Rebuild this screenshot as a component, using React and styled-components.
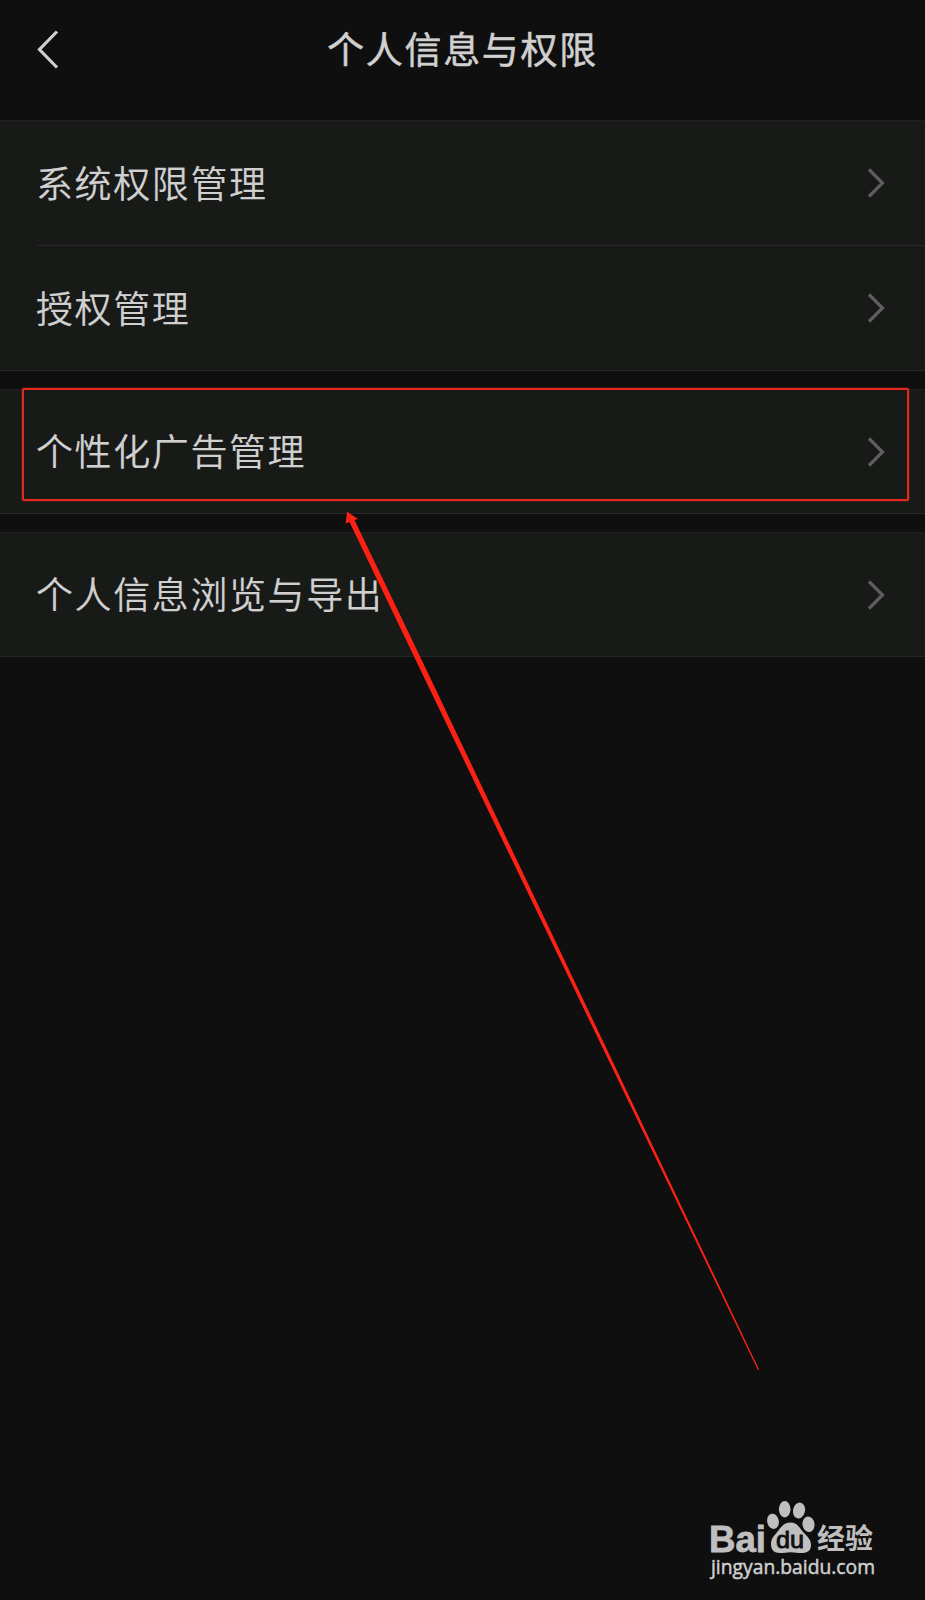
import React from 'react'
import styled, { createGlobalStyle } from 'styled-components'

const groups = [
    ["系统权限管理", "授权管理"],
    ["个性化广告管理"],
    ["个人信息浏览与导出"]
]

const GlobalStyle = createGlobalStyle`
    body {
        margin: 0;
        background: #0f0f0f;
    }
`

const Page = styled.div`
    position: relative;
    width: 925px;
    height: 1600px;
    overflow: hidden;
    background: #0f0f0f;
    color: #d0d0d0;
    font-family: "Noto Sans CJK SC", sans-serif;
`

const Header = styled.header`
    height: 120px;
    box-sizing: border-box;
    padding: 0 37px 22px;
    display: grid;
    grid-template-columns: 24px 1fr 24px;
    align-items: center;
`

const BackIcon = styled.svg`
    width: 24px;
    height: 40px;
    fill: none;
    stroke: #d0d0d0;
    stroke-width: 3.2;
`

const Title = styled.h1`
    margin: 0;
    padding-bottom: 2px;
    font-size: 37px;
    line-height: 56px;
    font-weight: 400;
    letter-spacing: 1.7px;
    text-align: center;
    -webkit-text-stroke: 0.5px #d0d0d0;
`

const Groups = styled.main`
    display: flex;
    flex-direction: column;
    gap: 18px;
`

const Group = styled.section`
    background: #181a18;
    border-top: 1px solid #1f201f;
    border-bottom: 1px solid #262626;
`

const Row = styled.div`
    height: ${props => props.$divided ? '125px' : '124px'};
    margin-left: 37px;
    padding-right: 40px;
    box-sizing: border-box;
    display: flex;
    align-items: center;
    justify-content: space-between;
    border-top: ${props => props.$divided ? '1px solid #272827' : 'none'};

    &:only-child {
        height: 123px;
    }
`

const Label = styled.span`
    margin-left: -1px;
    padding-bottom: 3px;
    font-size: 37px;
    line-height: 56px;
    font-weight: 350;
    letter-spacing: 1.6px;
    -webkit-text-stroke: 0.15px #d0d0d0;
`

const Chevron = styled.svg`
    width: 18px;
    height: 30px;
    fill: none;
    stroke: #5e5e5e;
    stroke-width: 3.2;
`

const Highlight = styled.div`
    position: absolute;
    top: 388px;
    left: 22px;
    width: 887px;
    height: 113px;
    box-sizing: border-box;
    border: 2px solid #e42a1e;
    border-radius: 2px;
    box-shadow: 0 0 0 1px rgba(228, 42, 30, 0.2);
`

const Arrow = styled.svg`
    position: absolute;
    top: 500px;
    left: 340px;
    width: 430px;
    height: 880px;
    fill: #fb2114;
`

const Watermark = styled.svg`
    position: absolute;
    right: 15px;
    bottom: 0;
    width: 220px;
    height: 120px;
    fill: #bfbfbf;
`

const BrandText = styled.text`
    font-family: "Liberation Sans", sans-serif;
    font-size: 37.5px;
    font-weight: 700;
    stroke: #bfbfbf;
    stroke-width: 0.8px;
`

const PawText = styled.text`
    font-family: "Liberation Sans", sans-serif;
    font-size: 24px;
    font-weight: 400;
    fill: #0f0f0f;
    stroke: #0f0f0f;
    stroke-width: 0.9px;
`

const BrandCjk = styled.text`
    font-family: "Noto Sans CJK SC", sans-serif;
    font-size: 28px;
    font-weight: 700;
`

const SiteText = styled.text`
    font-family: "Open Sans", sans-serif;
    font-size: 20px;
    font-weight: 500;
    fill: #cfcfcf;
    stroke: #cfcfcf;
    stroke-width: 0.5px;
`

const BaiduMark = () => (
    <Watermark viewBox="0 0 220 120">
        <BrandText x="19" y="71.500" textLength="57" lengthAdjust="spacingAndGlyphs">Bai</BrandText>
        <ellipse cx="83" cy="41.3" rx="5.8" ry="7.7" transform="rotate(-12 83 41.3)" />
        <ellipse cx="94.7" cy="29.3" rx="5.8" ry="8.2" />
        <ellipse cx="109" cy="30.5" rx="6" ry="8" transform="rotate(12 109 30.5)" />
        <ellipse cx="118.5" cy="44.3" rx="6" ry="7.8" transform="rotate(-8 118.5 44.3)" />
        <path d="M100.500 42.500C108 42.500 110 49 114 53C118 57 121 60 121 65C121 71 117 73 112 73C108 73 105 72.200 100.500 72.200C96 72.200 94 73 90 73C84 73 81 70 81 64C81 58 85 55 88 51C91 47 94 42.500 100.500 42.500Z" />
        <PawText x="86" y="68" textLength="28" lengthAdjust="spacingAndGlyphs">du</PawText>
        <BrandCjk x="127" y="69" textLength="56">经验</BrandCjk>
        <SiteText x="21" y="93.500" textLength="164" lengthAdjust="spacingAndGlyphs">jingyan.baidu.com</SiteText>
    </Watermark>
)

export default () => (
    <Page>
        <GlobalStyle />
        <Header>
            <BackIcon viewBox="0 0 24 40">
                <path d="M20 2.500L2.500 20.500L20 38.500" />
            </BackIcon>
            <Title>个人信息与权限</Title>
        </Header>
        <Groups>
            {groups.map(rows => (
                <Group key={rows[0]}>
                    {rows.map((label, idx) => (
                        <Row key={label} $divided={idx !== 0}>
                            <Label>{label}</Label>
                            <Chevron viewBox="0 0 18 30">
                                <path d="M2 1.500L15.500 15L2 28.500" />
                            </Chevron>
                        </Row>
                    ))}
                </Group>
            ))}
        </Groups>
        <Highlight />
        <Arrow viewBox="340 500 430 880">
            <path d="M347 511.500L358 519L354.500 520L426.500 670L759.300 1370L757.900 1370L420.500 670L349.500 522L345.700 523.500Z" />
        </Arrow>
        <BaiduMark />
    </Page>
)
